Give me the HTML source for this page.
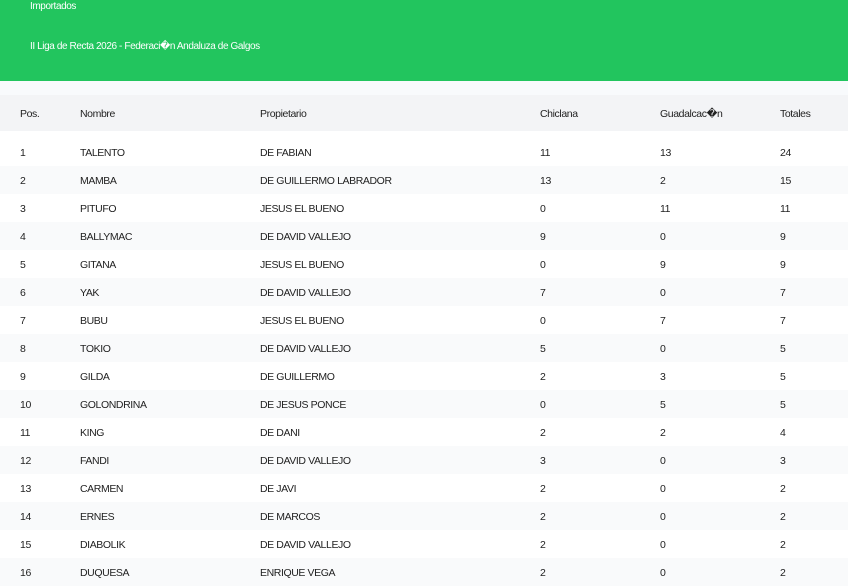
<!DOCTYPE html>
<html><head><meta charset="utf-8"><style>
*{margin:0;padding:0;box-sizing:border-box}
body{width:848px;height:570px;overflow:hidden;background:#fff;font-family:"Liberation Sans",sans-serif;font-size:10.5px;color:#222;letter-spacing:-0.4px}
.hd{position:absolute;left:0;top:0;width:848px;height:81px;background:#22c55e;color:#fff}
.hd div{position:absolute;left:30px;font-size:10px}
.gap{position:absolute;top:81px;left:0;width:848px;height:14px;background:#f8fafc}
.row{position:absolute;left:0;width:848px;height:28px}
.row span{position:absolute;top:calc(50% + 1px);transform:translateY(-50%);white-space:nowrap}
.th{top:95px;height:36px;background:#f3f4f6}
.g{background:#f9fafb}
.c1{left:20px}.c2{left:80px}.c3{left:260px}.c4{left:540px}.c5{left:660px}.c6{left:780px}
</style></head><body>
<div class="hd"><div style="top:1px">Importados</div><div style="top:41px">II Liga de Recta 2026 - Federaci�n Andaluza de Galgos</div></div>
<div class="gap"></div>
<div class="row th"><span class="c1">Pos.</span><span class="c2">Nombre</span><span class="c3">Propietario</span><span class="c4">Chiclana</span><span class="c5">Guadalcac�n</span><span class="c6">Totales</span></div>
<div class="row" style="top:138px"><span class="c1">1</span><span class="c2">TALENTO</span><span class="c3">DE FABIAN</span><span class="c4">11</span><span class="c5">13</span><span class="c6">24</span></div>
<div class="row g" style="top:166px"><span class="c1">2</span><span class="c2">MAMBA</span><span class="c3">DE GUILLERMO LABRADOR</span><span class="c4">13</span><span class="c5">2</span><span class="c6">15</span></div>
<div class="row" style="top:194px"><span class="c1">3</span><span class="c2">PITUFO</span><span class="c3">JESUS EL BUENO</span><span class="c4">0</span><span class="c5">11</span><span class="c6">11</span></div>
<div class="row g" style="top:222px"><span class="c1">4</span><span class="c2">BALLYMAC</span><span class="c3">DE DAVID VALLEJO</span><span class="c4">9</span><span class="c5">0</span><span class="c6">9</span></div>
<div class="row" style="top:250px"><span class="c1">5</span><span class="c2">GITANA</span><span class="c3">JESUS EL BUENO</span><span class="c4">0</span><span class="c5">9</span><span class="c6">9</span></div>
<div class="row g" style="top:278px"><span class="c1">6</span><span class="c2">YAK</span><span class="c3">DE DAVID VALLEJO</span><span class="c4">7</span><span class="c5">0</span><span class="c6">7</span></div>
<div class="row" style="top:306px"><span class="c1">7</span><span class="c2">BUBU</span><span class="c3">JESUS EL BUENO</span><span class="c4">0</span><span class="c5">7</span><span class="c6">7</span></div>
<div class="row g" style="top:334px"><span class="c1">8</span><span class="c2">TOKIO</span><span class="c3">DE DAVID VALLEJO</span><span class="c4">5</span><span class="c5">0</span><span class="c6">5</span></div>
<div class="row" style="top:362px"><span class="c1">9</span><span class="c2">GILDA</span><span class="c3">DE GUILLERMO</span><span class="c4">2</span><span class="c5">3</span><span class="c6">5</span></div>
<div class="row g" style="top:390px"><span class="c1">10</span><span class="c2">GOLONDRINA</span><span class="c3">DE JESUS PONCE</span><span class="c4">0</span><span class="c5">5</span><span class="c6">5</span></div>
<div class="row" style="top:418px"><span class="c1">11</span><span class="c2">KING</span><span class="c3">DE DANI</span><span class="c4">2</span><span class="c5">2</span><span class="c6">4</span></div>
<div class="row g" style="top:446px"><span class="c1">12</span><span class="c2">FANDI</span><span class="c3">DE DAVID VALLEJO</span><span class="c4">3</span><span class="c5">0</span><span class="c6">3</span></div>
<div class="row" style="top:474px"><span class="c1">13</span><span class="c2">CARMEN</span><span class="c3">DE JAVI</span><span class="c4">2</span><span class="c5">0</span><span class="c6">2</span></div>
<div class="row g" style="top:502px"><span class="c1">14</span><span class="c2">ERNES</span><span class="c3">DE MARCOS</span><span class="c4">2</span><span class="c5">0</span><span class="c6">2</span></div>
<div class="row" style="top:530px"><span class="c1">15</span><span class="c2">DIABOLIK</span><span class="c3">DE DAVID VALLEJO</span><span class="c4">2</span><span class="c5">0</span><span class="c6">2</span></div>
<div class="row g" style="top:558px"><span class="c1">16</span><span class="c2">DUQUESA</span><span class="c3">ENRIQUE VEGA</span><span class="c4">2</span><span class="c5">0</span><span class="c6">2</span></div>
</body></html>
